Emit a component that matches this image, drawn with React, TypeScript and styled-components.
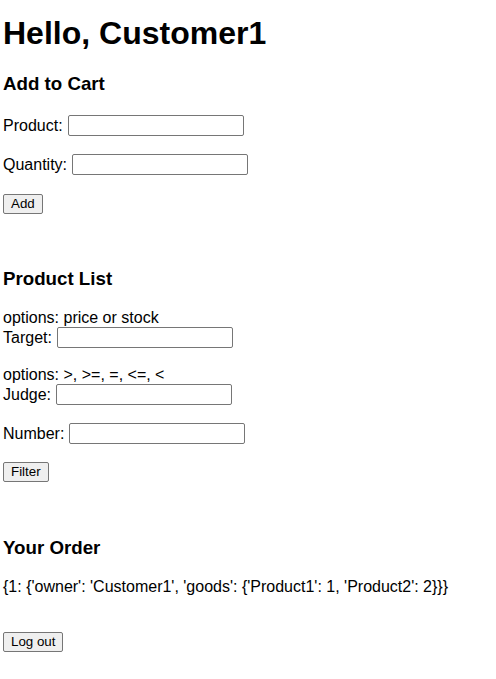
import React from 'react';
import styled, { createGlobalStyle } from 'styled-components';

const GlobalStyle = createGlobalStyle`
  body {
    margin: 0;
    background: #ffffff;
    color: #000000;
    font-family: 'Liberation Sans', Arial, sans-serif;
    font-size: 16px;
  }
`;

const Page = styled.div`
  padding: 14px 8px 20px 3px;
`;

const Greeting = styled.h1`
  margin: 0 0 21px;
  font-size: 32px;
  line-height: 38px;
  font-weight: 700;
`;

const Section = styled.section<{ $top: number }>`
  margin-top: ${(p) => p.$top}px;
`;

const SectionTitle = styled.h3`
  margin: 0;
  font-size: 18.72px;
  line-height: 22px;
  font-weight: 700;
`;

const Hint = styled.div<{ $top: number }>`
  margin-top: ${(p) => p.$top}px;
  line-height: 19px;
`;

const Field = styled.label<{ $top: number }>`
  display: flex;
  align-items: center;
  gap: 5px;
  height: 21px;
  margin-top: ${(p) => p.$top}px;
`;

const TextInput = styled.input`
  box-sizing: border-box;
  width: 176px;
  height: 21px;
  margin: 0;
  padding: 1px 2px;
  border: 1px solid #767676;
  border-radius: 2px;
  background: #ffffff;
  font-family: 'Liberation Sans', Arial, sans-serif;
  font-size: 13.33px;
`;

const ButtonRow = styled.div<{ $top: number }>`
  display: flex;
  margin-top: ${(p) => p.$top}px;
`;

const Button = styled.button`
  box-sizing: border-box;
  height: 20px;
  margin: 0;
  padding: 0 7px;
  border: 1px solid #767676;
  border-radius: 2px;
  background: #efefef;
  color: #000000;
  font-family: 'Liberation Sans', Arial, sans-serif;
  font-size: 13.33px;
  line-height: 18px;
`;

const OrderText = styled.div<{ $top: number }>`
  margin-top: ${(p) => p.$top}px;
  line-height: 19px;
`;

export default function App() {
  const order = "{1: {'owner': 'Customer1', 'goods': {'Product1': 1, 'Product2': 2}}}";
  return (
    <Page>
      <GlobalStyle />
      <Greeting>Hello, Customer1</Greeting>

      <Section $top={0}>
        <SectionTitle>Add to Cart</SectionTitle>
        <Field $top={20}>
          Product:
          <TextInput type="text" />
        </Field>
        <Field $top={18}>
          Quantity:
          <TextInput type="text" />
        </Field>
        <ButtonRow $top={19}>
          <Button>Add</Button>
        </ButtonRow>
      </Section>

      <Section $top={54}>
        <SectionTitle>Product List</SectionTitle>
        <Hint $top={18}>options: price or stock</Hint>
        <Field $top={0}>
          Target:
          <TextInput type="text" />
        </Field>
        <Hint $top={17}>options: &gt;, &gt;=, =, &lt;=, &lt;</Hint>
        <Field $top={0}>
          Judge:
          <TextInput type="text" />
        </Field>
        <Field $top={18}>
          Number:
          <TextInput type="text" />
        </Field>
        <ButtonRow $top={18}>
          <Button>Filter</Button>
        </ButtonRow>
      </Section>

      <Section $top={55}>
        <SectionTitle>Your Order</SectionTitle>
        <OrderText $top={18}>{order}</OrderText>
        <ButtonRow $top={36}>
          <Button>Log out</Button>
        </ButtonRow>
      </Section>
    </Page>
  );
}
